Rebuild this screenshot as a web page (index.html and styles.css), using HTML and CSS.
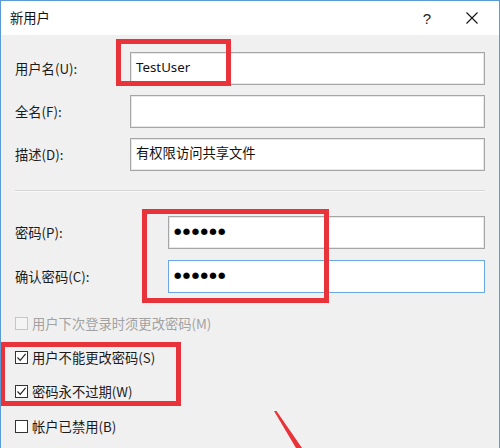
FILE: index.html
```html
<!DOCTYPE html>
<html lang="zh-CN">
<head>
<meta charset="utf-8">
<title>新用户</title>
<link rel="stylesheet" href="styles.css">
</head>
<body>
<div class="window">
  <div class="titlebar">
    <span class="title">新用户</span>
    <div class="controls">
      <span class="help">?</span>
      <svg class="close" width="12" height="12" viewBox="0 0 12 12"><path d="M0.5 0.5 L11.5 11.5 M11.5 0.5 L0.5 11.5" stroke="#111" stroke-width="1.1" fill="none"/></svg>
    </div>
  </div>
  <div class="content">
    <div class="form">
      <span class="label">用户名(U):</span><div class="field">TestUser</div>
      <span class="label">全名(F):</span><div class="field"></div>
      <span class="label">描述(D):</span><div class="field">有权限访问共享文件</div>
    </div>
    <div class="sep"></div>
    <div class="form pw">
      <span class="label">密码(P):</span><div class="field dots">●●●●●●</div>
      <span class="label">确认密码(C):</span><div class="field dots focus">●●●●●●</div>
    </div>
    <div class="checks">
      <div class="check disabled"><span class="box"></span><span>用户下次登录时须更改密码(M)</span></div>
      <div class="check"><span class="box"><svg width="11" height="11" viewBox="0 0 11 11"><path d="M1.5 5.5 L4.2 8.3 L9.6 1.8" stroke="#222" stroke-width="1.2" fill="none"/></svg></span><span>用户不能更改密码(S)</span></div>
      <div class="check"><span class="box"><svg width="11" height="11" viewBox="0 0 11 11"><path d="M1.5 5.5 L4.2 8.3 L9.6 1.8" stroke="#222" stroke-width="1.2" fill="none"/></svg></span><span>密码永不过期(W)</span></div>
      <div class="check"><span class="box"></span><span>帐户已禁用(B)</span></div>
    </div>
  </div>
  <div class="mark mark1"></div>
  <div class="mark mark2"></div>
  <div class="mark mark3"></div>
  <svg class="arrow" width="500" height="448" viewBox="0 0 500 448"><polygon points="274,411 276.5,411 302,448 296,448" fill="#e8333a"/></svg>
</div>
</body>
</html>
```
FILE: styles.css
```css
* { box-sizing: border-box; }
html, body { margin: 0; padding: 0; }
body {
  width: 500px;
  height: 448px;
  overflow: hidden;
  background: #f0f0f0;
  font-family: "Noto Sans CJK SC", "Noto Sans", sans-serif;
  font-size: 13.3px;
  color: #1a1a1a;
}
.window {
  position: relative;
  width: 500px;
  height: 448px;
  border: 1px solid #5b9bd5;
  border-bottom: none;
  background: #f0f0f0;
  overflow: hidden;
}
.titlebar {
  height: 34px;
  background: #fff;
  display: flex;
  align-items: center;
  justify-content: space-between;
  padding-left: 9px;
}
.title { font-size: 13.3px; color: #111; line-height: 1; }
.controls {
  display: flex;
  align-items: center;
  height: 100%;
  padding-right: 21px;
}
.help {
  font-family: "Liberation Sans", sans-serif;
  font-size: 15px;
  color: #222;
  width: 50px;
  text-align: center;
  margin-right: 14px;
}
.content {
  padding: 17px 13px 0 14px;
}
.form {
  display: grid;
  grid-template-columns: 115px 355px;
  row-gap: 10px;
  align-items: center;
}
.form.pw {
  grid-template-columns: 153px 317px;
  row-gap: 11px;
}
.label { line-height: 1; }
.field {
  height: 33px;
  background: #fff;
  border: 1px solid #a6a6a6;
  box-shadow: inset 0 0 0 1px #e8e8e8;
  padding: 5px 5px 0 5px;
  line-height: 18px;
  font-family: "Noto Sans", "Noto Sans CJK SC", sans-serif;
  font-size: 13.3px;
  color: #111;
}
.field.dots {
  font-family: "DejaVu Sans", sans-serif;
  font-size: 8.5px;
  letter-spacing: 1.4px;
  padding-top: 5px;
  color: #000;
}
.field.focus {
  border-color: #6aa7e4;
  box-shadow: none;
}
.sep {
  height: 2px;
  border-top: 1px solid #d4d4d4;
  border-bottom: 1px solid #fafafa;
  margin: 19px 1px 24px 0;
}
.checks {
  margin-top: 13px;
}
.check {
  height: 34.3px;
  display: flex;
  align-items: center;
  gap: 4px;
  font-size: 13.3px;
}
.box {
  width: 13px;
  height: 13px;
  border: 1px solid #333;
  background: #fff;
  display: flex;
  align-items: center;
  justify-content: center;
  flex: none;
}
.check.disabled { color: #a2a2a2; }
.check.disabled .box { border-color: #c6c6c6; background: #f4f4f4; }
.mark {
  position: absolute;
  border: 5px solid #e8333a;
}
.mark1 { left: 115px; top: 38px; width: 115px; height: 47px; }
.mark2 { left: 141px; top: 208px; width: 187px; height: 94px; }
.mark3 { left: -1px; top: 341px; width: 181px; height: 64px; }
.arrow { position: absolute; left: -1px; top: -1px; }
```
